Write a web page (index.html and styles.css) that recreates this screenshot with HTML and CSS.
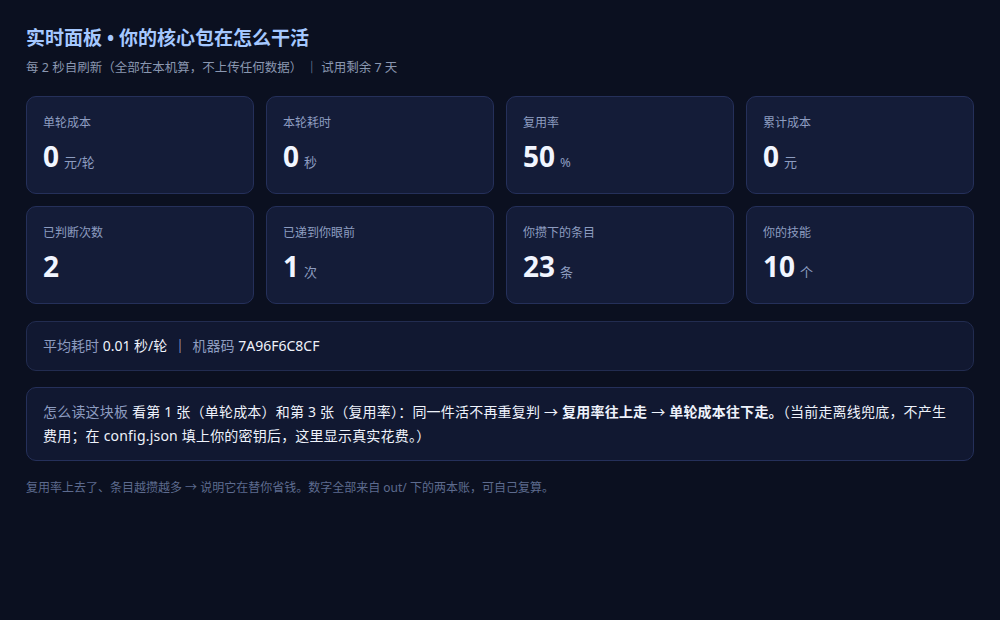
FILE: index.html
```html
<!DOCTYPE html>
<html lang="zh-CN">
<head>
  <meta charset="UTF-8">
  <meta name="viewport" content="width=device-width, initial-scale=1.0">
  <title>实时面板</title>
  <link rel="stylesheet" href="styles.css">
</head>
<body>
  <h1 class="title">实时面板 • 你的核心包在怎么干活</h1>
  <p class="sub">每 2 秒自刷新（全部在本机算，不上传任何数据） ｜ 试用剩余 7 天</p>

  <div class="grid">
    <div class="card">
      <div class="label">单轮成本</div>
      <div class="value">0<span class="unit">元/轮</span></div>
    </div>
    <div class="card">
      <div class="label">本轮耗时</div>
      <div class="value">0<span class="unit">秒</span></div>
    </div>
    <div class="card">
      <div class="label">复用率</div>
      <div class="value">50<span class="unit">%</span></div>
    </div>
    <div class="card">
      <div class="label">累计成本</div>
      <div class="value">0<span class="unit">元</span></div>
    </div>
    <div class="card">
      <div class="label">已判断次数</div>
      <div class="value">2</div>
    </div>
    <div class="card">
      <div class="label">已递到你眼前</div>
      <div class="value">1<span class="unit">次</span></div>
    </div>
    <div class="card">
      <div class="label">你攒下的条目</div>
      <div class="value">23<span class="unit">条</span></div>
    </div>
    <div class="card">
      <div class="label">你的技能</div>
      <div class="value">10<span class="unit">个</span></div>
    </div>
  </div>

  <div class="bar">
    <span class="muted">平均耗时</span> 0.01 秒/轮
    <span class="sep">｜</span>
    <span class="muted">机器码</span> 7A96F6C8CF
  </div>

  <div class="note">
    <span class="muted">怎么读这块板</span>
    看第 1 张（单轮成本）和第 3 张（复用率）：同一件活不再重复判 → <b>复用率往上走</b> → <b>单轮成本往下走。</b>（当前走离线兜底，不产生费用；在 config.json 填上你的密钥后，这里显示真实花费。）
  </div>

  <p class="foot">复用率上去了、条目越攒越多 → 说明它在替你省钱。数字全部来自 out/ 下的两本账，可自己复算。</p>
</body>
</html>
```

FILE: styles.css
```css
body {
  font-family: "Noto Sans", "Noto Sans CJK SC", sans-serif;
  background-color: #0b1020;
  color: #e2e8f0;
  margin: 0;
  padding: 24px 26px;
}
.title {
  font-size: 19px;
  line-height: 28px;
  font-weight: 700;
  color: #a5c8ff;
  margin: 0 0 6px;
}
.sub {
  font-size: 12.5px;
  line-height: 20px;
  color: #8a97b0;
  margin: 0 0 18px;
}
.grid {
  display: grid;
  grid-template-columns: repeat(4, 1fr);
  gap: 12px;
}
.card {
  background-color: #141c38;
  border: 1px solid #25305a;
  border-radius: 10px;
  padding: 16px 16px 19px;
}
.label {
  font-family: "Noto Sans CJK SC", sans-serif;
  font-size: 12px;
  line-height: 17px;
  color: #8d9cc0;
}
.value {
  display: flex;
  align-items: baseline;
  margin-top: 8px;
  height: 36px;
  font-size: 28px;
  line-height: 36px;
  font-weight: 700;
  color: #f1f5ff;
}
.unit {
  font-size: 13px;
  line-height: 1;
  font-weight: 400;
  color: #8d9cc0;
  margin-left: 5px;
}
.bar {
  margin-top: 17px;
  background-color: #111831;
  border: 1px solid #222c50;
  border-radius: 10px;
  padding: 14px 16px;
  font-size: 14px;
  line-height: 20px;
  color: #eef2fb;
}
.sep {
  color: #c7cfe0;
  margin: 0 2px;
}
.muted {
  color: #8d9cc0;
}
.note {
  margin-top: 16px;
  background-color: #111831;
  border: 1px solid #25305a;
  border-radius: 10px;
  padding: 12px 16px;
  font-size: 14px;
  line-height: 24px;
  letter-spacing: 0.2px;
  color: #eef2fb;
}
.note b {
  font-weight: 700;
}
.foot {
  margin: 19px 0 0;
  font-size: 12px;
  line-height: 16px;
  color: #5d6b8e;
}
```
